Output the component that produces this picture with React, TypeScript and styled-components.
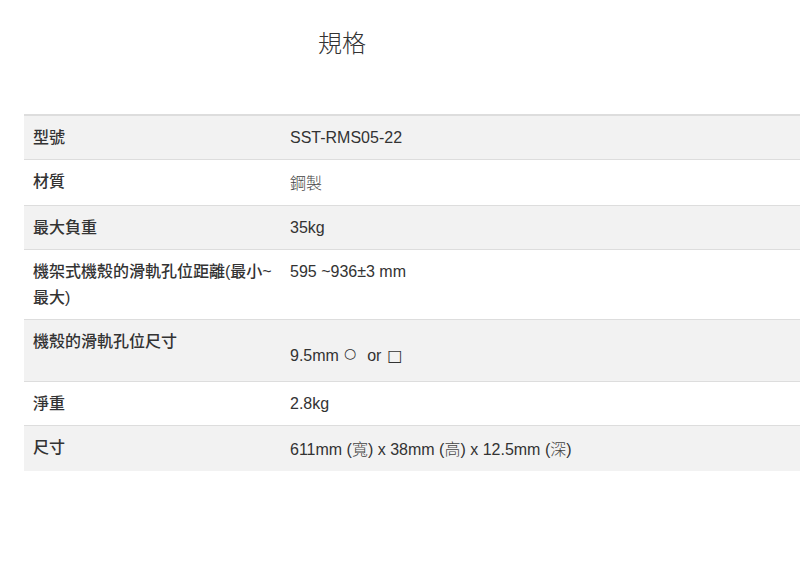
import React from "react";
import styled, { createGlobalStyle } from "styled-components";

const Global = createGlobalStyle`
  html, body { margin: 0; padding: 0; background: #fff; overflow: hidden; }
  body { font-family: "Liberation Sans", Arial, "Noto Sans CJK TC", sans-serif; color: #333; }
`;

const Page = styled.div`
  width: 800px;
  padding-left: 24px;
  box-sizing: border-box;
`;

const Title = styled.h2`
  margin: 0;
  padding: 27px 0 0 294px;
  height: 114px;
  box-sizing: border-box;
  font-size: 24px;
  font-weight: 300;
  line-height: 30px;
  color: #333;
  font-family: "Noto Sans CJK TC", sans-serif;
`;

const Table = styled.table`
  width: 776px;
  border-collapse: collapse;
  border-top: 2px solid #ddd;
  font-size: 16px;
  line-height: 26px;
`;

const Row = styled.tr<{ $shade: boolean }>`
  background: ${(p) => (p.$shade ? "#f2f2f2" : "#fff")};
  & + & { border-top: 1px solid #ddd; }
`;

const Label = styled.td`
  width: 239px;
  padding: 9px 9px 8px;
  vertical-align: top;
  font-weight: 500;
  color: #333;
  font-family: "Liberation Sans", Arial, "Noto Sans CJK TC", sans-serif;
`;

const Value = styled.td<{ $drop?: boolean }>`
  padding: ${(p) => (p.$drop ? "23px 9px 12px" : "9px 9px 8px")};
  vertical-align: top;
  color: #333;
`;

const Cjk = styled.span`
  font-family: "Noto Sans CJK TC", sans-serif;
  font-weight: 300;
  color: #444;
`;

const Sym = styled.span`
  display: inline-block;
  font-family: "DejaVu Sans", sans-serif;
  font-size: 14px;
  position: relative;
  top: -3px;
  margin: 0 11px 0 5px;
`;

const Box = styled.span`
  display: inline-block;
  font-family: "DejaVu Sans", sans-serif;
  font-size: 16px;
  margin-left: 6px;
`;

export default function App() {
  return (
    <>
      <Global />
      <Page>
        <Title>規格</Title>
        <Table>
          <tbody>
            <Row $shade>
              <Label>型號</Label>
              <Value>SST-RMS05-22</Value>
            </Row>
            <Row $shade={false}>
              <Label>材質</Label>
              <Value><Cjk>鋼製</Cjk></Value>
            </Row>
            <Row $shade>
              <Label>最大負重</Label>
              <Value>35kg</Value>
            </Row>
            <Row $shade={false}>
              <Label>機架式機殼的滑軌孔位距離(最小~最大)</Label>
              <Value>595 ~936±3 mm</Value>
            </Row>
            <Row $shade>
              <Label>機殼的滑軌孔位尺寸</Label>
              <Value $drop>9.5mm<Sym>○</Sym>or<Box>□</Box></Value>
            </Row>
            <Row $shade={false}>
              <Label>淨重</Label>
              <Value>2.8kg</Value>
            </Row>
            <Row $shade>
              <Label>尺寸</Label>
              <Value>611mm (<Cjk>寬</Cjk>) x 38mm (<Cjk>高</Cjk>) x 12.5mm (<Cjk>深</Cjk>)</Value>
            </Row>
          </tbody>
        </Table>
      </Page>
    </>
  );
}
